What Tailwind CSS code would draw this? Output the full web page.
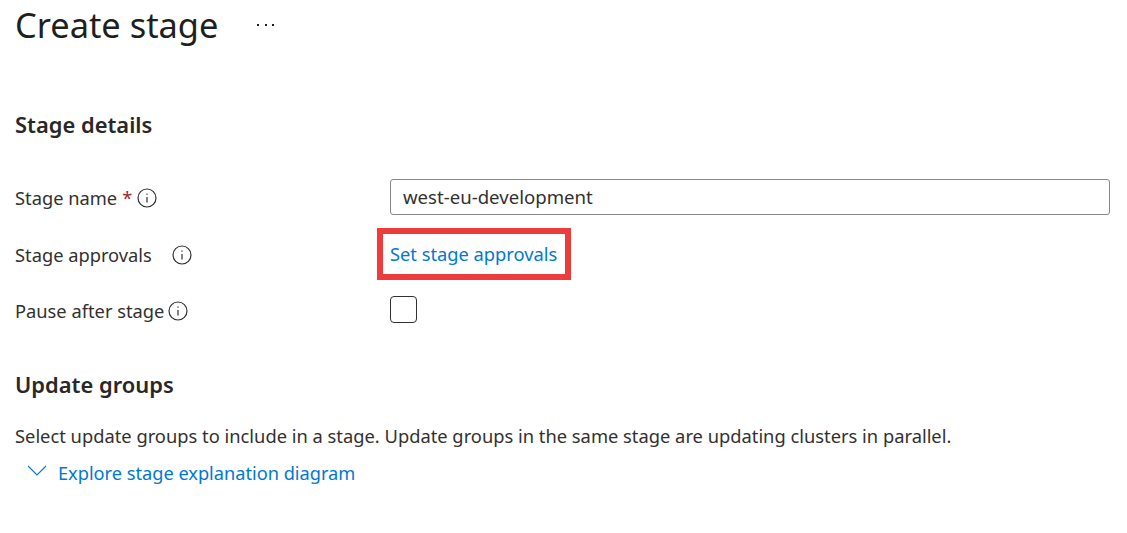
<!DOCTYPE html>
<html lang="en">
<head>
    <meta charset="UTF-8">
    <title>Create stage</title>
    <script src="https://cdn.jsdelivr.net/npm/@tailwindcss/browser@4"></script>
</head>
<body class="bg-white font-['Noto_Sans',sans-serif] text-[18.3px] text-[#323130] overflow-hidden">
<div class="w-[1127px] h-[533px] pl-[15px] flex flex-col">

    <!-- Header -->
    <div class="h-[50px] flex items-center">
        <h1 class="text-[34.4px] leading-[50px] text-[#201f1e]">Create stage</h1>
        <svg class="ml-[39px]" width="18" height="4" viewBox="0 0 18 4" fill="#201f1e">
            <rect x="0" y="1" width="2" height="2"/><rect x="8" y="1" width="2" height="2"/><rect x="15" y="1" width="2" height="2"/>
        </svg>
    </div>

    <h2 class="mt-[60px] h-[30px] leading-[30px] text-[21.9px] font-semibold text-[#292827]">Stage details</h2>

    <!-- Form rows -->
    <div class="mt-[30px] flex flex-col">
        <div class="h-[56px] flex items-center">
            <div class="w-[375px] flex items-center">
                <span>Stage name</span>
                <span class="ml-[5px] text-[#a4262c]">*</span>
                <svg class="ml-[5px]" width="20" height="20" viewBox="0 0 20 20" fill="none" stroke="#323130" stroke-width="1.2"><circle cx="10" cy="10" r="9"/><path d="M10 9v5.5"/><path d="M10 5.4v1.4"/></svg>
            </div>
            <div class="w-[720px] h-[36px] mb-[3px] pt-[1px] border border-[#8a8886] rounded-[3px] px-[12px] flex items-center text-[18.6px]">west-eu-development</div>
        </div>
        <div class="h-[56px] flex items-center">
            <div class="w-[375px] pt-[2px] flex items-center">
                <span>Stage approvals</span>
                <svg class="ml-[20px]" width="20" height="20" viewBox="0 0 20 20" fill="none" stroke="#323130" stroke-width="1.2"><circle cx="10" cy="10" r="9"/><path d="M10 9v5.5"/><path d="M10 5.4v1.4"/></svg>
            </div>
            <div class="-ml-[13px] border-[6px] border-[#ee3b3b] w-[194px] h-[52px] pl-[7px] flex items-center text-[#0078d4]">Set stage approvals</div>
        </div>
        <div class="mt-[1px] h-[56px] flex items-center">
            <div class="w-[375px] flex items-center">
                <span>Pause after stage</span>
                <svg class="ml-[4px]" width="20" height="20" viewBox="0 0 20 20" fill="none" stroke="#323130" stroke-width="1.2"><circle cx="10" cy="10" r="9"/><path d="M10 9v5.5"/><path d="M10 5.4v1.4"/></svg>
            </div>
            <div class="w-[27px] h-[27px] mb-[4px] border border-[#323130] rounded-[4px]"></div>
        </div>
    </div>

    <h2 class="mt-[31px] h-[30px] leading-[30px] text-[21.9px] font-semibold text-[#292827]">Update groups</h2>

    <p class="mt-[21px] h-[30px] leading-[30px] text-[18.32px]">Select update groups to include in a stage. Update groups in the same stage are updating clusters in parallel.</p>

    <div class="mt-[8px] h-[30px] pl-[12px] flex items-center text-[#0078d4] text-[18.2px]">
        <svg class="mb-[8px]" width="20" height="11" viewBox="0 0 20 11" fill="none" stroke="#0078d4" stroke-width="1.1"><path d="M1 1l9 9 9-9"/></svg>
        <span class="ml-[11px]">Explore stage explanation diagram</span>
    </div>
</div>
</body>
</html>
